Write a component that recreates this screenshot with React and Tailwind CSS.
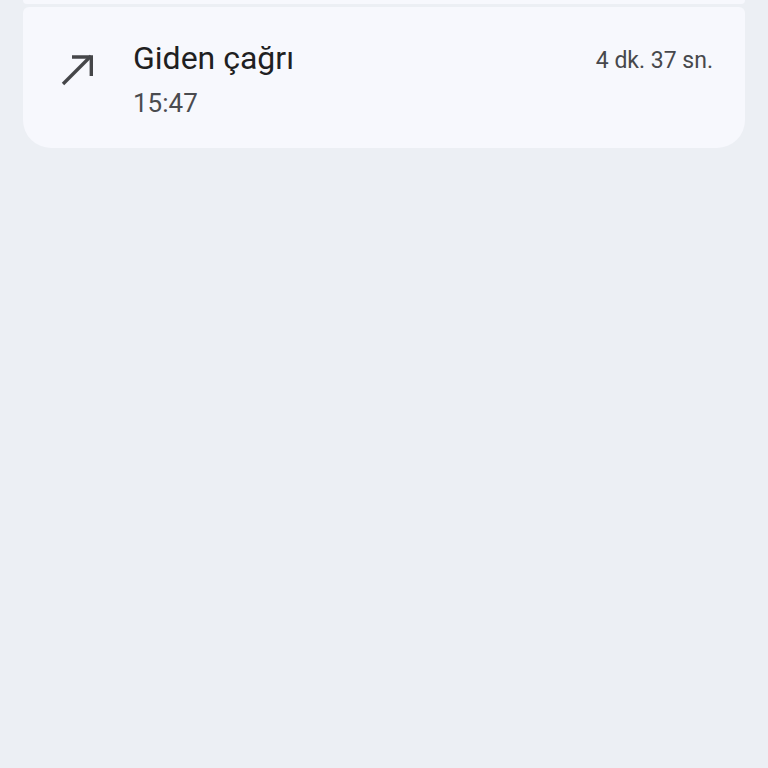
import React from "react";

const CallMade = () => (
  <svg width="34" height="34" viewBox="0 0 34 34" fill="none">
    <path d="M2 30 L30 2" stroke="#454649" strokeWidth="3.4" />
    <path d="M11 3 H30.3 V22" stroke="#454649" strokeWidth="3.4" />
  </svg>
);

export default function App() {
  return (
    <div className="min-h-screen w-full bg-[#eceff4] px-[23px]" style={{ fontFamily: "Roboto, 'Noto Sans', sans-serif" }}>
      <div className="h-[4px] rounded-b-[4px] bg-[#f7f8fd]" />
      <div className="mt-[3px] flex h-[141px] items-start rounded-t-[6px] rounded-b-[28px] bg-[#f7f8fd] pl-[38px] pr-[32px]">
        <div className="mt-[47px] w-[34px] shrink-0">
          <CallMade />
        </div>
        <div className="ml-[38px] flex flex-1 flex-col">
          <div className="mt-[31px] text-[32px] leading-[40px] text-[#1f1f22]">Giden çağrı</div>
          <div className="mt-[10px] text-[26px] leading-[30px] text-[#4a4b4f]">15:47</div>
        </div>
        <div className="mt-[39px] text-[23px] leading-[30px] text-[#47484c]">4 dk. 37 sn.</div>
      </div>
    </div>
  );
}
